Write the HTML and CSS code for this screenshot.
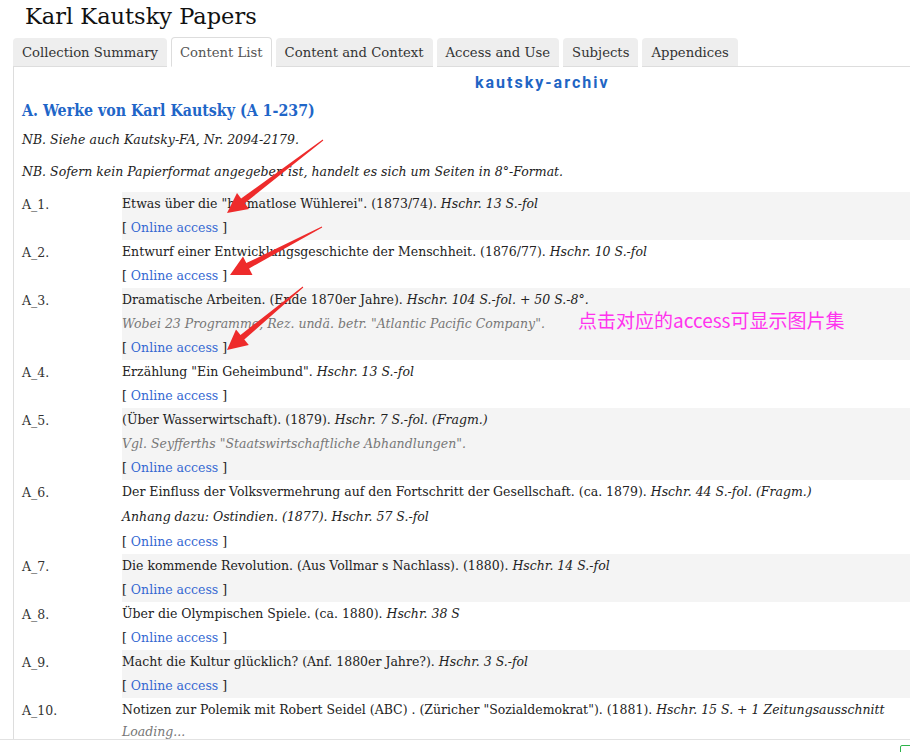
FILE: index.html
```html
<!DOCTYPE html>
<html>
<head>
<meta charset="utf-8">
<link rel="stylesheet" href="styles.css">
</head>
<body>
<div class="page">
  <h1 class="title">Karl Kautsky Papers</h1>
  <div class="tabs">
    <div class="tab">Collection Summary</div>
    <div class="tab active">Content List</div>
    <div class="tab">Content and Context</div>
    <div class="tab">Access and Use</div>
    <div class="tab">Subjects</div>
    <div class="tab">Appendices</div>
    <div class="tab-fill"></div>
  </div>
  <div class="panel">
    <div class="archive">kautsky-archiv</div>
    <h2 class="series">A. Werke von Karl Kautsky (A 1-237)</h2>
    <p class="nb nb1">NB. Siehe auch Kautsky-FA, Nr. 2094-2179.</p>
    <p class="nb nb2">NB. Sofern kein Papierformat angegeben ist, handelt es sich um Seiten in 8°-Format.</p>
    <div class="list">
      <div class="row shade">
        <div class="id">A_1.</div>
        <div class="body">
          <div class="line">Etwas über die "heimatlose Wühlerei". (1873/74). <i>Hschr. 13 S.-fol</i></div>
          <div class="line">[ <a class="link">Online access</a> ]</div>
        </div>
      </div>
      <div class="row">
        <div class="id">A_2.</div>
        <div class="body">
          <div class="line">Entwurf einer Entwicklungsgeschichte der Menschheit. (1876/77). <i>Hschr. 10 S.-fol</i></div>
          <div class="line">[ <a class="link">Online access</a> ]</div>
        </div>
      </div>
      <div class="row shade">
        <div class="id">A_3.</div>
        <div class="body">
          <div class="line">Dramatische Arbeiten. (Ende 1870er Jahre). <i>Hschr. 104 S.-fol. + 50 S.-8°.</i></div>
          <div class="line note">Wobei 23 Programme, Rez. undä. betr. "Atlantic Pacific Company".</div>
          <div class="line">[ <a class="link">Online access</a> ]</div>
        </div>
      </div>
      <div class="row">
        <div class="id">A_4.</div>
        <div class="body">
          <div class="line">Erzählung "Ein Geheimbund". <i>Hschr. 13 S.-fol</i></div>
          <div class="line">[ <a class="link">Online access</a> ]</div>
        </div>
      </div>
      <div class="row shade">
        <div class="id">A_5.</div>
        <div class="body">
          <div class="line">(Über Wasserwirtschaft). (1879). <i>Hschr. 7 S.-fol. (Fragm.)</i></div>
          <div class="line note">Vgl. Seyfferths "Staatswirtschaftliche Abhandlungen".</div>
          <div class="line">[ <a class="link">Online access</a> ]</div>
        </div>
      </div>
      <div class="row">
        <div class="id">A_6.</div>
        <div class="body">
          <div class="line">Der Einfluss der Volksvermehrung auf den Fortschritt der Gesellschaft. (ca. 1879). <i>Hschr. 44 S.-fol. (Fragm.)</i></div>
          <div class="line appendix"><i>Anhang dazu: Ostindien. (1877). Hschr. 57 S.-fol</i></div>
          <div class="line">[ <a class="link">Online access</a> ]</div>
        </div>
      </div>
      <div class="row shade">
        <div class="id">A_7.</div>
        <div class="body">
          <div class="line">Die kommende Revolution. (Aus Vollmar s Nachlass). (1880). <i>Hschr. 14 S.-fol</i></div>
          <div class="line">[ <a class="link">Online access</a> ]</div>
        </div>
      </div>
      <div class="row">
        <div class="id">A_8.</div>
        <div class="body">
          <div class="line">Über die Olympischen Spiele. (ca. 1880). <i>Hschr. 38 S</i></div>
          <div class="line">[ <a class="link">Online access</a> ]</div>
        </div>
      </div>
      <div class="row shade">
        <div class="id">A_9.</div>
        <div class="body">
          <div class="line">Macht die Kultur glücklich? (Anf. 1880er Jahre?). <i>Hschr. 3 S.-fol</i></div>
          <div class="line">[ <a class="link">Online access</a> ]</div>
        </div>
      </div>
      <div class="row">
        <div class="id">A_10.</div>
        <div class="body">
          <div class="line">Notizen zur Polemik mit Robert Seidel (ABC) . (Züricher "Sozialdemokrat"). (1881). <i>Hschr. 15 S. + 1 Zeitungsausschnitt</i></div>
          <div class="line note loading">Loading...</div>
        </div>
      </div>
    </div>
  </div>
  <div class="footer"><span class="footer-icon"></span></div>

  <svg class="arrows" width="910" height="752" viewBox="0 0 910 752">
    <polygon points="323.3,140.4 244.7,203.3 249,209 227,213 237,193 241.1,198.5 322.7,139.6" />
    <polygon points="322.2,227.4 249.1,268.5 252.5,275 230,275 243,256.5 246.3,263.1 321.8,226.6" />
    <polygon points="303.3,287.4 244.3,339.5 248.8,345 227,350 236,329.5 240.5,334.9 302.7,286.6" />
  </svg>
  <div class="annotation">点击对应的access可显示图片集</div>
</div>
</body>
</html>
```
FILE: styles.css
```css
html, body {
  margin: 0;
  padding: 0;
  background: #fff;
}
body {
  font-family: "DejaVu Serif", "Liberation Serif", serif;
  color: #222;
  overflow: hidden;
}
.page {
  position: relative;
  width: 910px;
  height: 752px;
  overflow: hidden;
}
.title {
  margin: 0;
  padding: 2px 0 0 25px;
  height: 36px;
  font-size: 22.5px;
  font-weight: normal;
  line-height: 28px;
  color: #111;
}
.tabs {
  display: flex;
  align-items: flex-end;
  gap: 4px;
  padding-left: 13px;
  height: 29px;
}
.tab {
  height: 28px;
  line-height: 30px;
  padding: 0 9px;
  background: #eeeeee;
  border-radius: 4px 4px 0 0;
  font-size: 13.2px;
  color: #333;
  border-bottom: 1px solid #dddddd;
}
.tab.active {
  background: #fff;
  color: #555;
  border: 1px solid #dddddd;
  border-bottom: 1px solid #fff;
  padding: 0 8px;
}
.tab-fill {
  flex: 1;
  border-bottom: 1px solid #dddddd;
  margin-left: -4px;
}
.panel {
  margin-left: 13px;
  border-left: 1px solid #dddddd;
  height: 672px;
  overflow: hidden;
  padding-left: 8px;
}
.archive {
  margin: 6px 0 0 453px;
  height: 20px;
  line-height: 20px;
  font-family: Roboto, "DejaVu Sans", sans-serif;
  font-weight: bold;
  font-size: 16px;
  letter-spacing: 2px;
  color: #1f65c4;
}
.series {
  margin: 6px 0 0 0;
  height: 24px;
  line-height: 24px;
  font-size: 15.8px;
  font-stretch: condensed;
  font-weight: bold;
  color: #1f66c8;
}
.nb {
  margin: 0;
  font-style: italic;
  font-size: 12.5px;
  line-height: 20px;
  color: #222;
}
.nb1 { margin-top: 7px; }
.nb2 { margin-top: 12px; }
.list {
  margin-top: 10px;
}
.row {
  display: grid;
  grid-template-columns: 100px 1fr;
}
.id {
  line-height: 25px;
  font-size: 12.5px;
  color: #333;
}
.body {
  font-size: 12.5px;
}
.row.shade .body {
  background: #f4f4f4;
}
.line {
  line-height: 24px;
  white-space: nowrap;
}
.line.appendix {
  padding: 1px 0;
}
.line.loading {
  line-height: 19px;
}
.note {
  font-style: italic;
  color: #777;
}
.link {
  color: #3468d2;
  text-decoration: none;
}
.footer {
  position: relative;
  border-top: 1px solid #e2e2e2;
  height: 13px;
}
.footer-icon {
  position: absolute;
  right: -2px;
  top: 5px;
  width: 10px;
  height: 10px;
  border: 1px solid #2db34a;
  border-radius: 2px;
}
.arrows {
  position: absolute;
  left: 0;
  top: 0;
  pointer-events: none;
}
.arrows polygon {
  fill: #ee2b2b;
}
.annotation {
  position: absolute;
  left: 578px;
  top: 307px;
  font-family: "Noto Sans CJK SC", "Noto Sans", sans-serif;
  font-size: 19px;
  line-height: 26px;
  color: #ff33ee;
  white-space: nowrap;
}
```
